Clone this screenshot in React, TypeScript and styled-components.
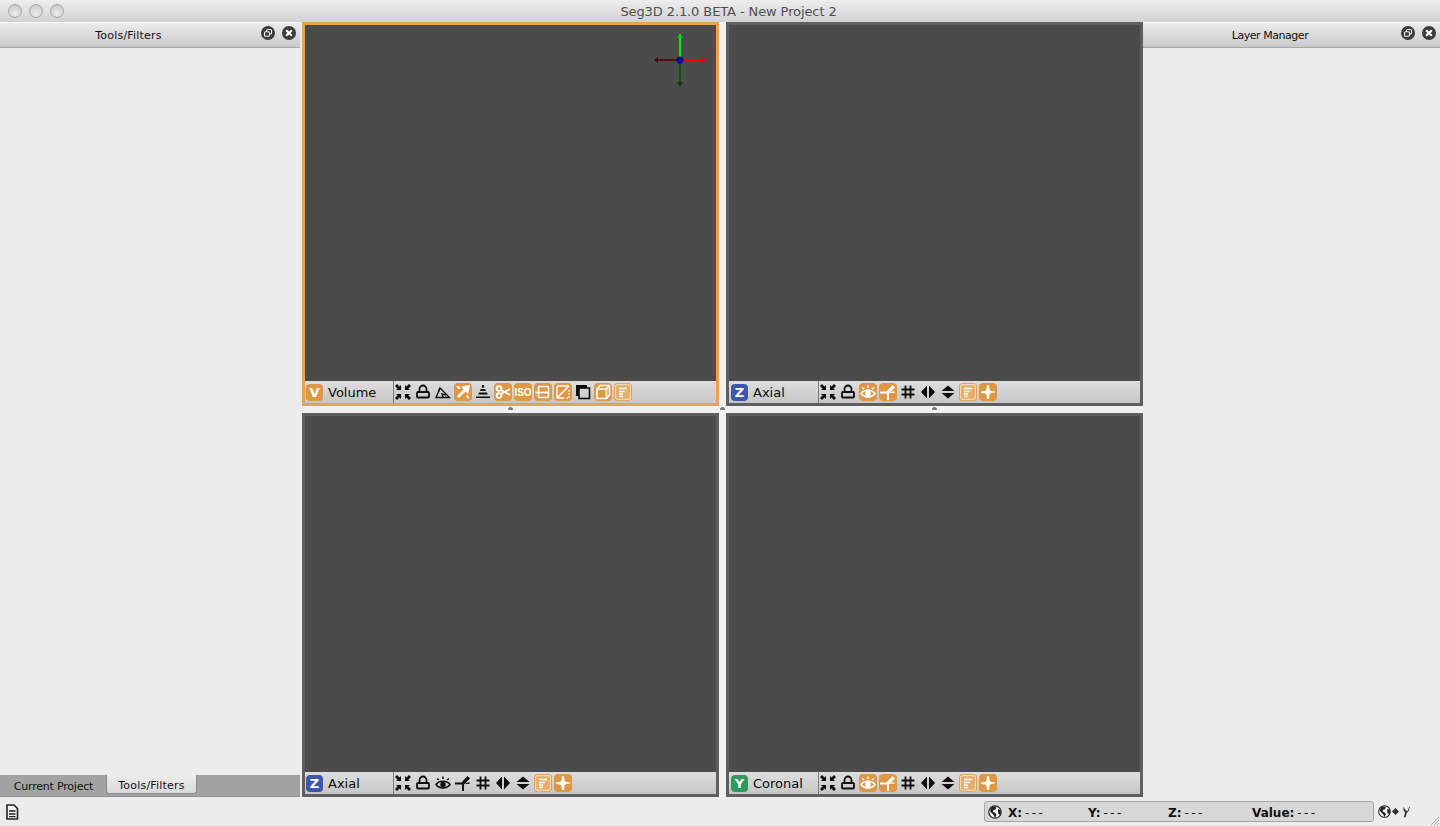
import * as React from 'react';
import styled, { createGlobalStyle } from 'styled-components';

const GlobalStyle = createGlobalStyle`
  html, body {
    margin: 0;
    padding: 0;
    background: #ececec;
    overflow: hidden;
  }
  * {
    box-sizing: border-box;
  }
`;

const Window = styled.div`
  width: 1440px;
  height: 826px;
  display: flex;
  flex-direction: column;
  background: #ececec;
  font-family: 'DejaVu Sans', sans-serif;
  overflow: hidden;
`;

const TitleBar = styled.div`
  height: 22px;
  flex: none;
  display: flex;
  align-items: center;
  position: relative;
  justify-content: center;
  padding-left: 17px;
  background: linear-gradient(#ededed, #d2d2d2);
  border-radius: 5px 5px 0 0;
  color: #4f4f4f;
  font-size: 13px;
  letter-spacing: -0.1px;
`;

const Lights = styled.div`
  position: absolute;
  left: 8px;
  top: 4px;
  display: flex;
  gap: 7px;
`;

const Light = styled.span`
  width: 14px;
  height: 14px;
  border-radius: 50%;
  border: 1px solid #a9a9a9;
  background: radial-gradient(circle at 50% 70%, #ececec, #c2c2c2);
`;

const Main = styled.div`
  flex: 1;
  min-height: 0;
  display: flex;
`;

const Dock = styled.div<{ $width: number }>`
  width: ${(p) => p.$width}px;
  flex: none;
  display: flex;
  flex-direction: column;
`;

const DockHeader = styled.div`
  height: 26px;
  flex: none;
  position: relative;
  display: flex;
  align-items: center;
  justify-content: center;
  padding-right: 43px;
  background: linear-gradient(#ececec, #c9c9c9);
  border-top: 1px solid #f8f8f8;
  border-bottom: 1px solid #a9a9a9;
  font-size: 11px;
  color: #111;
`;

const DockTitle = styled.span<{ $tracking: number }>`
  letter-spacing: ${(p) => p.$tracking}px;
`;

const DockButtons = styled.div`
  position: absolute;
  right: 4px;
  top: 3px;
  display: flex;
  gap: 7px;
`;

const DockButton = styled.svg`
  width: 14px;
  height: 14px;
  display: block;
`;

const DockBody = styled.div`
  flex: 1;
  background: #ececec;
`;

const TabBar = styled.div`
  height: 22px;
  flex: none;
  display: flex;
  padding-left: 1px;
  background: #a3a3a3;
  border-bottom: 1px solid #8e8e8e;
`;

const Tab = styled.div<{ $active?: boolean }>`
  width: ${(p) => (p.$active ? 91 : 105)}px;
  height: 19px;
  display: flex;
  align-items: center;
  justify-content: center;
  padding-top: 3px;
  font-size: 11px;
  letter-spacing: ${(p) => (p.$active ? 0.2 : -0.2)}px;
  color: #111;
  background: ${(p) => (p.$active ? 'linear-gradient(#ececec, #dadada)' : 'transparent')};
  border: ${(p) => (p.$active ? '1px solid #8c8c8c' : 'none')};
  border-top: none;
  border-radius: 0 0 3px 3px;
`;

const Center = styled.div`
  width: 843px;
  flex: none;
  padding-left: 2px;
  display: grid;
  grid-template-columns: 417px 7px 417px;
  grid-template-rows: 384px 7px 384px;
`;

const Viewer = styled.div<{ $focused?: boolean }>`
  position: relative;
  display: flex;
  flex-direction: column;
  background: #4b4b4b;
  border: 3px solid ${(p) => (p.$focused ? '#eba24e' : '#5f5f5f')};
`;

const Canvas = styled.div`
  flex: 1;
`;

const Toolbar = styled.div<{ $inset: number }>`
  height: 22px;
  flex: none;
  display: flex;
  align-items: center;
  padding-left: ${(p) => p.$inset}px;
  background: linear-gradient(#dedede, #c6c6c6);
`;

const ViewLabel = styled.div`
  width: 89px;
  height: 100%;
  flex: none;
  display: flex;
  align-items: center;
  gap: 5px;
  padding-left: 1px;
  border-right: 1px solid #7b7b7b;
  font-size: 13px;
  color: #0b0b0b;
`;

const Badge = styled.span<{ $color: string }>`
  width: 17px;
  height: 17px;
  flex: none;
  display: flex;
  align-items: center;
  justify-content: center;
  border-radius: 4px;
  background: ${(p) => p.$color};
  color: #fff;
  font-size: 13px;
  font-weight: 700;
`;

const Tools = styled.div`
  display: flex;
  gap: 2px;
`;

const ToolIcon = styled.svg<{ $active?: boolean }>`
  width: 18px;
  height: 18px;
  display: block;
  color: ${(p) => (p.$active ? '#fff' : '#0d0d0d')};
`;

const Splitter = styled.div`
  display: flex;
  align-items: flex-start;
  justify-content: center;
  padding-top: 1px;
  background: #f1f1f1;
`;

const Handle = styled.span`
  width: 5px;
  height: 3px;
  background: #7a7a7a;
  border-radius: 3px 3px 0 0;
`;

const Gizmo = styled.svg`
  position: absolute;
  right: 7px;
  top: 8px;
  width: 56px;
  height: 56px;
`;

const StatusBar = styled.div`
  height: 29px;
  flex: none;
  display: flex;
  align-items: center;
  padding: 0 0 0 5px;
  position: relative;
`;

const DocIcon = styled.svg`
  width: 14px;
  height: 16px;
  display: block;
`;

const Readout = styled.div`
  margin-left: auto;
  width: 390px;
  height: 21px;
  display: flex;
  align-items: center;
  gap: 6px;
  padding-left: 3px;
  border: 1px solid #a5a5a5;
  border-radius: 3px;
  background: #d7d7d7;
`;

const Fields = styled.div`
  display: flex;
  padding-top: 2px;
`;

const Globe = styled.svg<{ $size: number }>`
  width: ${(p) => p.$size}px;
  height: ${(p) => p.$size}px;
  flex: none;
  display: block;
`;

const Field = styled.span<{ $width: number }>`
  width: ${(p) => p.$width}px;
  flex: none;
  font-size: 12px;
  font-weight: 700;
  color: #111;
  white-space: nowrap;
`;

const Dash = styled.span`
  font-weight: 400;
  margin-left: 3px;
  letter-spacing: 2.4px;
`;

const ProjectionTools = styled.div`
  width: 66px;
  flex: none;
  display: flex;
  align-items: center;
  gap: 1px;
  padding-left: 4px;
`;

const Grip = styled.svg`
  position: absolute;
  right: 0;
  bottom: 0;
  width: 12px;
  height: 12px;
`;

const stroke = {
  fill: 'none',
  stroke: 'currentColor',
  strokeWidth: 1.6,
} as const;

const glyphs: Record<string, React.ReactNode> = {
  fit: (
    <path
      fill="currentColor"
      d="M1 3l2-2 2.5 2.5L7 2v5H2l1.5-1.5zM17 3l-2-2-2.5 2.5L11 2v5h5l-1.5-1.5zM1 15l2 2 2.5-2.5L7 16v-5H2l1.5 1.5zM17 15l-2 2-2.5-2.5L11 16v-5h5l-1.5 1.5z"
    />
  ),
  lock: (
    <g {...stroke} strokeWidth={1.8}>
      <path d="M5.5 9V6a3.5 3.5 0 0 1 7 0v3" />
      <rect x="3" y="9" width="12" height="5.5" rx="1" />
    </g>
  ),
  angle: (
    <g {...stroke} strokeWidth={1.3}>
      <path d="M2 14.5h13.5L6 5z" />
      <path d="M6 5l-1.5 4M9 14l-1-3 4 1" />
    </g>
  ),
  pick: (
    <g>
      <path fill="currentColor" d="M7 3.5L16 2l-2 9-2.5-2.5L5 15l-2-2 6.5-6.5z" />
      <path fill="currentColor" d="M2 3h2.5l2 2-1.5 1.5zM12 13l1.5-1 2 3.5H14z" />
    </g>
  ),
  pyramid: (
    <path
      fill="currentColor"
      d="M8.2 2h1.6l.6 2.5H7.6zM6.8 6h4.4l.8 2H6zM5 9.5h8l.8 2H4.2zM2 13.5h14V15H2z"
    />
  ),
  scissors: (
    <g {...stroke} strokeWidth={1.8}>
      <circle cx="5" cy="5.5" r="2.4" />
      <circle cx="5" cy="12.5" r="2.4" />
      <path d="M7 7l9 5M7 11l9-5" />
    </g>
  ),
  iso: (
    <text x="9" y="13" textAnchor="middle" fontSize="10" fontWeight="700" fill="currentColor">
      ISO
    </text>
  ),
  slice: (
    <g {...stroke}>
      <rect x="4.5" y="3.5" width="10" height="11" rx="1" />
      <path d="M1.5 9.5h13" strokeWidth={1.8} />
    </g>
  ),
  diagonal: (
    <g {...stroke} strokeWidth={1.4}>
      <path d="M3 3h12M3 3v12h7" />
      <path d="M15 3L3 15" />
      <path d="M15 7v8h-4" strokeDasharray="1.5 1.5" />
    </g>
  ),
  overlap: (
    <g>
      <path fill="currentColor" d="M2 2h11v3H5v8H2z" />
      <rect x="5" y="5" width="10.5" height="10.5" fill="none" stroke="currentColor" strokeWidth="1.6" />
    </g>
  ),
  cube: (
    <g {...stroke}>
      <path d="M3 6l3-3.5h9.5V12L12.5 15.5H3z" />
      <path d="M3 6h9.5v9.5M12.5 6l3-3.5" />
    </g>
  ),
  panel: (
    <g>
      <rect x="1.5" y="1.5" width="15" height="15" rx="2" fill="#e8ad6c" stroke="#f4d6ad" strokeWidth="1.3" />
      <path stroke="currentColor" strokeWidth="1.4" d="M5 5.5h8M5 8.5h6M5 11h4M5 13.5h4" />
    </g>
  ),
  eye: (
    <g {...stroke} strokeWidth={1.5}>
      <path d="M2 10.5c3-4.5 11-4.5 14 0-3 4.5-11 4.5-14 0z" />
      <circle cx="9" cy="10.5" r="2" fill="currentColor" />
      <path d="M3 4.5l2 1.5M9 2.5V5M15 4.5L13 6" />
    </g>
  ),
  cross: (
    <g>
      <path fill="currentColor" d="M1 8.5h6.5L13.5 2 16 4.5l-6 6V17H8v-6.5H1z" />
      <path fill="currentColor" d="M11.5 9l4-.8V10h-4z" />
    </g>
  ),
  hash: (
    <path {...stroke} strokeWidth={1.8} d="M6.5 2.5v13M11.5 2.5v13M2.5 6.5h13M2.5 11.5h13" />
  ),
  leftRight: <path fill="currentColor" d="M8 2.5v13L2 9zM10 2.5v13L16 9z" />,
  upDown: <path fill="currentColor" d="M2.5 8h13L9 2.5zM2.5 10h13L9 15.5z" />,
  plus: (
    <path
      fill="currentColor"
      d="M8 2h2l.5 4.5 1.500 1.500 4 .5v1l-4 .5-1.500 1.500-.5 4.500H8l-.5-4.500L6 10.500 2 10V8.500L6 8l1.500-1.500z"
    />
  ),
};

function Tool({ name, on }: { name: string; on?: boolean }) {
  return (
    <ToolIcon viewBox="0 0 18 18" $active={on} fontFamily="'Liberation Sans', sans-serif">
      {on && <rect x="0" y="0" width="18" height="18" rx="4" fill="#df9746" />}
      {glyphs[name]}
    </ToolIcon>
  );
}

type ToolDef = [string, boolean?];

const slicerTools = (plane: boolean): ToolDef[] => [
  ['fit'],
  ['lock'],
  ['eye', plane],
  ['cross', plane],
  ['hash'],
  ['leftRight'],
  ['upDown'],
  ['panel', true],
  ['plus', true],
];

const volumeTools: ToolDef[] = [
  ['fit'],
  ['lock'],
  ['angle'],
  ['pick', true],
  ['pyramid'],
  ['scissors', true],
  ['iso', true],
  ['slice', true],
  ['diagonal', true],
  ['overlap'],
  ['cube', true],
  ['panel', true],
];

function View(props: {
  letter: string;
  color: string;
  label: string;
  tools: ToolDef[];
  focused?: boolean;
  inset?: number;
  children?: React.ReactNode;
}) {
  return (
    <Viewer $focused={props.focused}>
      <Canvas />
      {props.children}
      <Toolbar $inset={props.inset ?? 0}>
        <ViewLabel>
          <Badge $color={props.color}>{props.letter}</Badge>
          {props.label}
        </ViewLabel>
        <Tools>
          {props.tools.map(([name, on], i) => (
            <Tool key={i} name={name} on={on} />
          ))}
        </Tools>
      </Toolbar>
    </Viewer>
  );
}

function PanelButtons() {
  return (
    <DockButtons>
      <DockButton viewBox="0 0 14 14">
        <circle cx="7" cy="7" r="7" fill="#3c3c3c" />
        <rect x="5.5" y="3.5" width="5" height="4.5" rx="1" fill="none" stroke="#eee" strokeWidth="1.1" />
        <rect x="3.5" y="5.8" width="5" height="4.5" rx="1" fill="#3c3c3c" stroke="#eee" strokeWidth="1.1" />
      </DockButton>
      <DockButton viewBox="0 0 14 14">
        <circle cx="7" cy="7" r="7" fill="#3c3c3c" />
        <path d="M4.2 4.2l5.6 5.6M9.8 4.2l-5.6 5.6" stroke="#fff" strokeWidth="2.2" />
      </DockButton>
    </DockButtons>
  );
}

function GlobeIcon({ size }: { size: number }) {
  return (
    <Globe viewBox="0 0 14 14" $size={size}>
      <circle cx="7" cy="7" r="6.2" fill="#fff" stroke="#222" strokeWidth="1.2" />
      <path
        fill="#222"
        d="M3 2.5l3.5-1 2 1-1 2-2 .5-.5 2 2.5 1 1 2-1.5 3-1.5-3-2-2-1.5-2zM10 4l2.5 1 .5 3-2 2-1-2z"
      />
    </Globe>
  );
}

export default function App() {
  return (
    <Window>
      <GlobalStyle />
      <TitleBar>
        <Lights>
          <Light />
          <Light />
          <Light />
        </Lights>
        Seg3D 2.1.0 BETA - New Project 2
      </TitleBar>
      <Main>
        <Dock $width={300}>
          <DockHeader>
            <DockTitle $tracking={0.2}>Tools/Filters</DockTitle>
            <PanelButtons />
          </DockHeader>
          <DockBody />
          <TabBar>
            <Tab>Current Project</Tab>
            <Tab $active>Tools/Filters</Tab>
          </TabBar>
        </Dock>
        <Center>
          <View letter="V" color="#df9746" label="Volume" tools={volumeTools} focused>
            <Gizmo viewBox="0 0 56 56">
              <path d="M27 27H2" stroke="#5a0c0c" strokeWidth="2" />
              <path d="M1 27l4-3v6z" fill="#3c0808" />
              <path d="M27 27h26" stroke="#ff0000" strokeWidth="2" />
              <path d="M54 27l-5-3v6z" fill="#d80c0c" />
              <path d="M27 27V1" stroke="#00f000" strokeWidth="2" />
              <path d="M27 0l-3 5h6z" fill="#00d000" />
              <path d="M27 27v26" stroke="#0c560c" strokeWidth="2" />
              <path d="M27 54l-3-5h6z" fill="#083c08" />
              <circle cx="27" cy="27" r="3.5" fill="#0c0c9a" />
            </Gizmo>
          </View>
          <Splitter />
          <View letter="Z" color="#3c57ad" label="Axial" tools={slicerTools(true)} inset={1} />
          <Splitter>
            <Handle />
          </Splitter>
          <Splitter>
            <Handle />
          </Splitter>
          <Splitter>
            <Handle />
          </Splitter>
          <View letter="Z" color="#3c57ad" label="Axial" tools={slicerTools(false)} />
          <Splitter />
          <View letter="Y" color="#2f9a5b" label="Coronal" tools={slicerTools(true)} inset={1} />
        </Center>
        <Dock $width={297}>
          <DockHeader>
            <DockTitle $tracking={-0.45}>Layer Manager</DockTitle>
            <PanelButtons />
          </DockHeader>
          <DockBody />
        </Dock>
      </Main>
      <StatusBar>
        <DocIcon viewBox="0 0 14 16">
          <path d="M2 1h7l3.5 3.5V15H2z" fill="#f4f4f4" stroke="#222" strokeWidth="1.6" />
          <path d="M4 7h6.5M4 10h6.5M4 12.7h6.5" stroke="#222" strokeWidth="1.3" />
        </DocIcon>
        <Readout>
          <GlobeIcon size={14} />
          <Fields>
            <Field $width={80}>
              X:<Dash>---</Dash>
            </Field>
            <Field $width={80}>
              Y:<Dash>---</Dash>
            </Field>
            <Field $width={84}>
              Z:<Dash>---</Dash>
            </Field>
            <Field $width={110}>
              Value:<Dash>---</Dash>
            </Field>
          </Fields>
        </Readout>
        <ProjectionTools>
          <GlobeIcon size={13} />
          <Globe viewBox="0 0 8 8" $size={7}>
            <path d="M4 0l4 4-4 4-4-4z" fill="#333" />
          </Globe>
          <Globe viewBox="0 0 12 14" $size={12}>
            <path d="M9.5 1L8 6 5.5 5 3 1v4l2 2.5L3.5 13h2L7 8l2-2 1.5-5z" fill="#333" />
          </Globe>
        </ProjectionTools>
        <Grip viewBox="0 0 12 12">
          <path d="M11 3l-8 8M11 6l-5 5M11 9l-2 2" stroke="#aaa" strokeWidth="1" />
        </Grip>
      </StatusBar>
    </Window>
  );
}
